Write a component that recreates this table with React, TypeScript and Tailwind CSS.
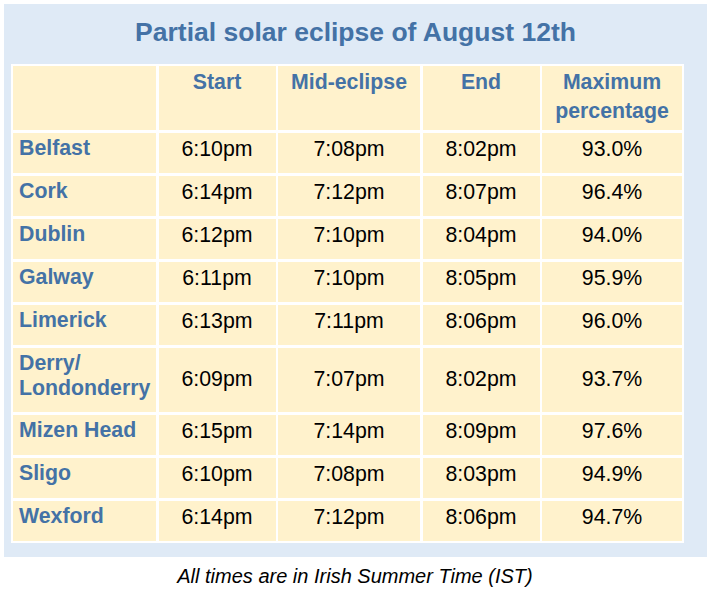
const rows = [
  { name: "Belfast", start: "6:10pm", mid: "7:08pm", end: "8:02pm", max: "93.0%" },
  { name: "Cork", start: "6:14pm", mid: "7:12pm", end: "8:07pm", max: "96.4%" },
  { name: "Dublin", start: "6:12pm", mid: "7:10pm", end: "8:04pm", max: "94.0%" },
  { name: "Galway", start: "6:11pm", mid: "7:10pm", end: "8:05pm", max: "95.9%" },
  { name: "Limerick", start: "6:13pm", mid: "7:11pm", end: "8:06pm", max: "96.0%" },
  { name: "Derry/ Londonderry", start: "6:09pm", mid: "7:07pm", end: "8:02pm", max: "93.7%", tall: true },
  { name: "Mizen Head", start: "6:15pm", mid: "7:14pm", end: "8:09pm", max: "97.6%" },
  { name: "Sligo", start: "6:10pm", mid: "7:08pm", end: "8:03pm", max: "94.9%" },
  { name: "Wexford", start: "6:14pm", mid: "7:12pm", end: "8:06pm", max: "94.7%" },
];

const headers = ["Start", "Mid-eclipse", "End", "Maximum percentage"];

const font = "font-['Liberation_Sans',Arial,sans-serif]";

export default function App() {
  return (
    <div className={`min-h-[595px] w-[710px] bg-white ${font}`}>
      <div className="ml-[4px] mt-[4px] w-[703px] bg-[#dfeaf6] pb-[14.5px] pl-[7px]">
        {/* Title */}
        <div className="h-[60px] pt-[13px] pr-[7px] text-center text-[26.5px] font-bold leading-[30px] text-[#4472a6]">
          Partial solar eclipse of August 12th
        </div>

        {/* Table */}
        <div className="grid w-fit grid-cols-[143px_117px_142px_117px_140px] gap-x-[2.5px] gap-y-[3px] bg-white p-[2px]">
          <div className="h-[63.5px] bg-[#fff2cc]" />
          {headers.map((h) => (
            <div
              key={h}
              className="h-[63.5px] bg-[#fff2cc] px-1 pt-[2px] text-center text-[21.3px] font-bold leading-[28.5px] text-[#4472a6]"
            >
              {h}
            </div>
          ))}

          {rows.map((r) => {
            const h = r.tall ? "h-[64px]" : "h-[40px]";
            const pb = r.tall ? "pb-0" : "pb-[7px]";
            return [
              <div
                key={r.name}
                className={`${h} bg-[#fff2cc] pl-[6px] pt-[3px] text-[21.3px] font-bold leading-[25.5px] text-[#4472a6]`}
              >
                {r.tall ? (
                  <>
                    Derry/
                    <br />
                    Londonderry
                  </>
                ) : (
                  r.name
                )}
              </div>,
              ...[r.start, r.mid, r.end, r.max].map((v, i) => (
                <div
                  key={r.name + i}
                  className={`${h} ${pb} flex items-center justify-center bg-[#fff2cc] text-[21.3px] leading-[24.5px] text-black`}
                >
                  {v}
                </div>
              )),
            ];
          })}
        </div>
      </div>

      <p className="mt-[8px] text-center text-[20px] italic leading-[23px] text-black">
        All times are in Irish Summer Time (IST)
      </p>
    </div>
  );
}
